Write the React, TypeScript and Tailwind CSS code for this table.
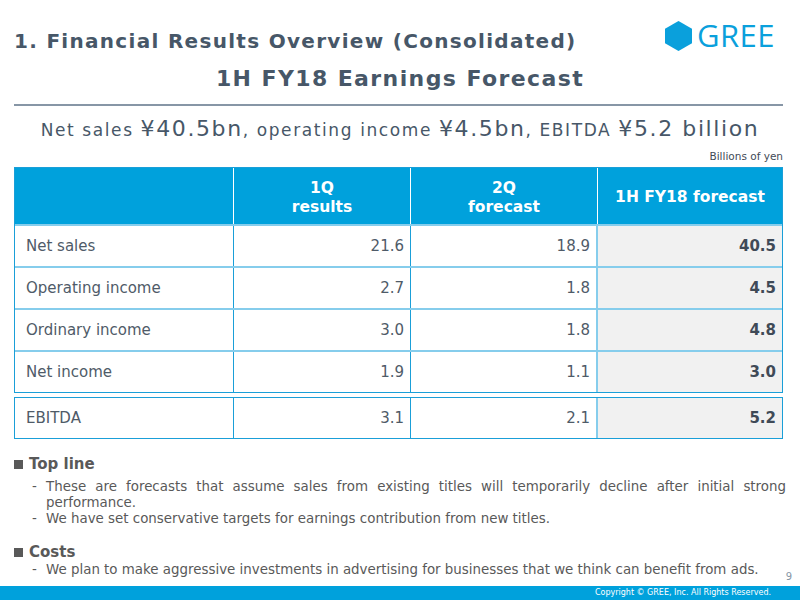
import React from "react";

const rows = [
  ["Net sales", "21.6", "18.9", "40.5"],
  ["Operating income", "2.7", "1.8", "4.5"],
  ["Ordinary income", "3.0", "1.8", "4.8"],
  ["Net income", "1.9", "1.1", "3.0"],
];

function Row({ r }: { r: string[] }) {
  return (
    <div className="grid grid-cols-[219px_177px_187px_184px] h-[40px] text-[15px] text-[#4f5b68]">
      <div className="flex items-center pl-[11px] border-r border-[#1a9fd8]">{r[0]}</div>
      <div className="flex items-center justify-end pr-[6px] border-r border-[#1a9fd8]">{r[1]}</div>
      <div className="flex items-center justify-end pr-[6px] border-r-2 border-[#86cdec]">{r[2]}</div>
      <div className="flex items-center justify-end pr-[6px] bg-[#f1f1f1] font-bold text-[#3f4a57]">{r[3]}</div>
    </div>
  );
}

export default function App() {
  return (
    <div
      className="w-[800px] h-[600px] bg-white relative overflow-hidden flex flex-col"
      style={{ fontFamily: '"DejaVu Sans", Verdana, sans-serif' }}
    >
      <div className="flex items-start justify-between pl-[14px] pr-[25px] pt-[20px] h-[62px]">
        <div className="text-[20px] font-bold text-[#475768] tracking-[1.3px] leading-[24px] mt-[9px]">
          1. Financial Results Overview (Consolidated)
        </div>
        <div className="flex items-center gap-[5px]">
          <svg width="27" height="30" viewBox="0 0 28 31">
            <polygon points="14,0 28,8 28,23 14,31 0,23 0,8" fill="#0aa0dc" />
          </svg>
          <span className="text-[31px] leading-[31px] text-[#0aa0dc] tracking-[0.5px] font-medium" style={{ fontFamily: '"Open Sans", sans-serif' }}>
            GREE
          </span>
        </div>
      </div>
      <div className="text-center text-[22px] font-bold text-[#475768] tracking-[1.4px] leading-[26px] mt-[4px]">
        1H FY18 Earnings Forecast
      </div>
      <div className="ml-[14px] mr-[17px] mt-[12px] h-[2px] bg-[#8796a6]" />
      <div className="text-center text-[#475768] mt-[8px] leading-[30px] tracking-[1.6px]">
        <span className="text-[17px]">Net sales </span>
        <span className="text-[22px]">¥40.5bn</span>
        <span className="text-[17px]">, operating income </span>
        <span className="text-[22px]">¥4.5bn</span>
        <span className="text-[17px]">, EBITDA </span>
        <span className="text-[22px]">¥5.2 billion</span>
      </div>
      <div className="text-right pr-[17px] text-[10.5px] text-[#3f4a57] leading-[14px] mt-[3px]">
        Billions of yen
      </div>
      <div className="ml-[14px] mt-[4px] w-[769px] border border-[#1a9fd8]">
        <div className="grid grid-cols-[219px_177px_187px_184px] h-[56px] bg-[#00a1dc] text-white font-bold text-[15.5px] leading-[19px]">
          <div className="border-r border-white" />
          <div className="flex flex-col items-center justify-center pt-[3px] border-r border-white">
            <span>1Q</span>
            <span>results</span>
          </div>
          <div className="flex flex-col items-center justify-center pt-[3px] border-r border-white">
            <span>2Q</span>
            <span>forecast</span>
          </div>
          <div className="flex items-center justify-center pt-[2px]">1H FY18 forecast</div>
        </div>
        {rows.map((r, i) => (
          <div key={i} className="border-t-2 border-[#86cdec]">
            <Row r={r} />
          </div>
        ))}
      </div>
      <div className="ml-[14px] mt-[4px] w-[769px] border border-[#1a9fd8]">
        <Row r={["EBITDA", "3.1", "2.1", "5.2"]} />
      </div>
      <div className="px-[14px] mt-[15px] text-[#595959]">
        <div className="flex items-center text-[15px] font-bold leading-[20px]">
          <span className="inline-block w-[9px] h-[9px] bg-[#595959] mr-[6px]" />
          Top line
        </div>
        <div className="mt-[5px] text-[13.4px] leading-[16px]">
          <div className="flex">
            <span className="w-[32px] pl-[18px] shrink-0">-</span>
            <span className="text-justify" style={{ textAlignLast: "left" }}>
              These are forecasts that assume sales from existing titles will temporarily decline after initial strong performance.
            </span>
          </div>
          <div className="flex">
            <span className="w-[32px] pl-[18px] shrink-0">-</span>
            <span>We have set conservative targets for earnings contribution from new titles.</span>
          </div>
        </div>
        <div className="flex items-center text-[15px] font-bold leading-[20px] mt-[15px]">
          <span className="inline-block w-[9px] h-[9px] bg-[#595959] mr-[6px]" />
          Costs
        </div>
        <div className="text-[13.4px] leading-[16px]">
          <div className="flex">
            <span className="w-[32px] pl-[18px] shrink-0">-</span>
            <span>We plan to make aggressive investments in advertising for businesses that we think can benefit from ads.</span>
          </div>
        </div>
      </div>
      <div className="absolute right-[8px] bottom-[16px] text-[10px] text-[#8796a6]">9</div>
      <div className="absolute left-0 bottom-0 w-[800px] h-[14px] bg-[#00a1dc] flex items-center justify-end pr-[29px]">
        <span className="text-[8px] text-white">
          Copyright © GREE, Inc. All Rights Reserved.
        </span>
      </div>
    </div>
  );
}
